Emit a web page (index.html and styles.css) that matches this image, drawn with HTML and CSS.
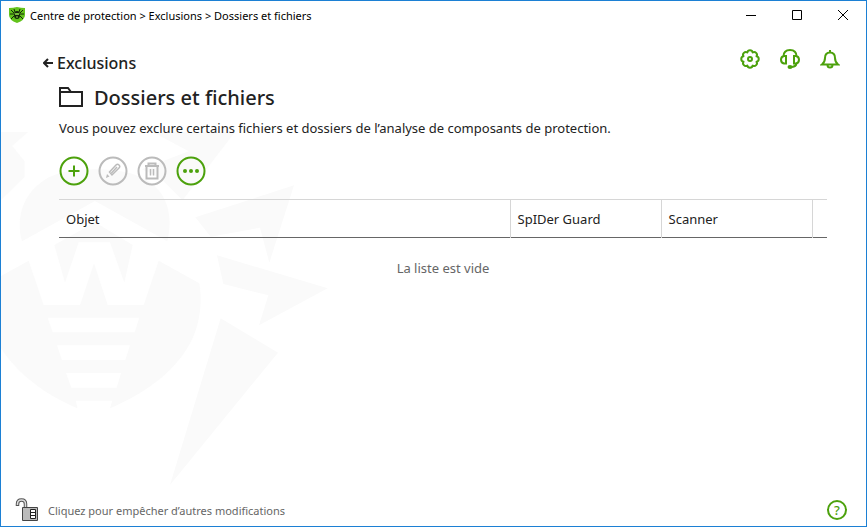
FILE: index.html
```html
<!DOCTYPE html>
<html lang="fr">
<head>
  <meta charset="UTF-8">
  <title>Dossiers et fichiers</title>
  <link rel="stylesheet" href="styles.css">
</head>
<body>
<div class="window">

  <svg class="watermark" viewBox="0 0 1020 1110" aria-hidden="true">
    <path d="M3 36H84L36 78L74 125L3 208V240L3 185Z"/>
    <path d="M3 120L36 78L74 125V170L3 240Z"/>
    <path d="M458 36H705L548 240L485 178Q455 160 425 148L566 94Z"/>
    <path d="M66 364C45 285 75 220 130 182C165 158 215 148 285 148C360 148 430 160 475 210C510 250 516 310 502 364L285 243Z"/>
    <path d="M163 375L285 307L398 375L373 488L330 367H236L195 488Z"/>
    <path fill-rule="evenodd" d="M3 468L86 422L131 555H240L282 430L323 555H431L476 422L598 490C610 560 595 640 555 695C500 775 420 825 330 865L337 842H228L232 865C140 825 60 770 3 685ZM143 593L158 637H404L418 593ZM171 676L186 720H376L390 676ZM198 759L214 803H350L363 759Z"/>
    <path d="M586 292L882 196L808 428L780 323L632 350Z"/>
    <path d="M651 406L983 505L777 616L805 526L670 492Z"/>
    <path d="M662 595L834 698L510 1095Z"/>
  </svg>

  <header class="titlebar">
    <svg class="app-icon" width="16" height="16" viewBox="0 0 16 16" aria-hidden="true">
      <path fill="#62c31c" d="M0 1Q4 1 8 0Q12 1 16 1V8Q16 13 8 16Q0 13 0 8Z"/>
      <path fill="none" stroke="#14250a" d="M5 6L2 3M11 6L14 3M5 7H1M11 7H15M5 9L2 12M11 9L14 12M6 5L5 2M10 5L11 2"/>
      <ellipse cx="8" cy="8" rx="3" ry="4" fill="#14250a"/>
      <path fill="none" stroke="#8ee047" d="M6 6L7 8L8 6L9 8L10 6M7 10H9"/>
    </svg>
    <nav class="breadcrumb">Centre de protection &gt; Exclusions &gt; Dossiers et fichiers</nav>
    <div class="window-buttons">
      <button type="button" aria-label="Réduire"><svg width="12" height="12"><path d="M1 6.500H11"/></svg></button>
      <button type="button" aria-label="Agrandir"><svg width="12" height="12"><path d="M1.500 1.500H10.500V10.500H1.500Z"/></svg></button>
      <button type="button" aria-label="Fermer"><svg width="12" height="12"><path d="M1 1L11 11M11 1L1 11"/></svg></button>
    </div>
  </header>

  <main>
    <div class="topbar">
      <a class="back" href="#">
        <svg width="10" height="10" viewBox="0 0 10 10" aria-hidden="true"><path d="M10 5H1.500M5 1L1 5L5 9"/></svg>
        Exclusions
      </a>
      <div class="tools">
        <button type="button" aria-label="Paramètres">
          <svg width="20" height="20" viewBox="0 0 20 20"><path stroke-linejoin="round" d="M16.500 7.300A2.750 2.750 0 0 1 16.500 12.700A2.750 2.750 0 0 1 12.700 16.500A2.750 2.750 0 0 1 7.300 16.500A2.750 2.750 0 0 1 3.500 12.700A2.750 2.750 0 0 1 3.500 7.300A2.750 2.750 0 0 1 7.300 3.500A2.750 2.750 0 0 1 12.700 3.500A2.750 2.750 0 0 1 16.500 7.300Z"/><circle cx="10" cy="10" r="2"/></svg>
        </button>
        <button type="button" aria-label="Support">
          <svg width="20" height="20" viewBox="0 0 20 20"><path d="M3.500 7.500C3.500 3.500 6 1 10 1S16.500 3.500 16.500 7.500M6 7V14.500H4Q1 14 1 10.800T4 7ZM14 7V14.500H16Q19 14 19 10.800T16 7ZM16.500 14.500Q16 17.500 12 18"/><ellipse class="solid" cx="10" cy="18" rx="2.500" ry="2"/></svg>
        </button>
        <button type="button" aria-label="Notifications">
          <svg width="20" height="20" viewBox="0 0 20 20"><path d="M2 15.500Q5 13 5 9Q5 3.500 10 3.500T15 9Q15 13 18 15.500ZM10 1V3.500M7.500 16Q7.500 18.500 10 18.500T12.500 16"/></svg>
        </button>
      </div>
    </div>

    <section class="content">
      <h1>
        <svg width="24" height="20" viewBox="0 0 24 20" aria-hidden="true"><path d="M1 19V1H9L12 5H23V19ZM1 5H12"/></svg>
        Dossiers et fichiers
      </h1>
      <p class="description">Vous pouvez exclure certains fichiers et dossiers de l’analyse de composants de protection.</p>

      <div class="actions">
        <button type="button" aria-label="Ajouter">
          <svg width="30" height="30"><circle cx="15" cy="15" r="13.500"/><path d="M15 9.500V20.500M9.500 15H20.500"/></svg>
        </button>
        <button type="button" aria-label="Modifier" disabled>
          <svg width="30" height="30"><circle cx="15" cy="15" r="13.500"/><path class="thin" d="M11.500 16L18 9Q19.500 7.500 21 9T21 12L14 19ZM13.500 17L19 11"/><path class="solid" d="M9 18L11.500 20.500L8 22Z"/></svg>
        </button>
        <button type="button" aria-label="Supprimer" disabled>
          <svg width="30" height="30"><circle cx="15" cy="15" r="13.500"/><path d="M8 10H22M11.500 10V7.500H18.500V10M9.500 10V22.500H20.500V10"/><path class="thin" d="M13.500 13V19.500M16.500 13V19.500"/></svg>
        </button>
        <button type="button" aria-label="Plus d'actions">
          <svg width="30" height="30"><circle cx="15" cy="15" r="13.500"/><g class="solid"><circle cx="9" cy="15" r="2"/><circle cx="15" cy="15" r="2"/><circle cx="21" cy="15" r="2"/></g></svg>
        </button>
      </div>

      <table class="objects">
        <thead>
          <tr>
            <th>Objet</th>
            <th class="component">SpIDer Guard</th>
            <th class="component">Scanner</th>
            <td class="spacer"></td>
          </tr>
        </thead>
        <tbody>
          <tr><td class="empty" colspan="4">La liste est vide</td></tr>
        </tbody>
      </table>
    </section>
  </main>

  <footer>
    <button type="button" class="lock">
      <svg width="24" height="26" viewBox="0 0 24 26" aria-hidden="true">
        <path fill="none" stroke="#555" stroke-width="3.500" d="M2.500 9V7Q2.500 3 6.500 3T10.500 7V12"/>
        <path fill="none" stroke="#ddd" stroke-width="1.500" d="M2.500 8V7Q2.500 3 6.500 3T10.500 7V12"/>
        <path fill="#bbb" stroke="#444" d="M7.500 10.500H22.500V23.500H7.500Z"/>
        <path fill="#fff" stroke="#222" d="M15.500 12.500H20.500V21.500H15.500ZM15.500 15.500H20.500M15.500 18.500H20.500"/>
      </svg>
      Cliquez pour empêcher d’autres modifications
    </button>
    <button type="button" class="help" aria-label="Aide">?</button>
  </footer>

</div>
</body>
</html>
```
FILE: styles.css
```css
* {
  box-sizing: border-box;
}

body {
  margin: 0;
  font-family: "Noto Sans", "Open Sans", sans-serif;
  font-size: 13px;
  color: #222;
  background: #fff;
}

button {
  display: flex;
  padding: 0;
  border: none;
  background: none;
  font: inherit;
  cursor: pointer;
}

svg {
  flex: none;
}

.window {
  position: relative;
  z-index: 0;
  display: flex;
  flex-direction: column;
  min-height: 100vh;
  border: 1px solid #1c80d4;
}

/* spider logo behind the content */
.watermark {
  position: absolute;
  z-index: -1;
  left: -1px;
  top: 119px;
  width: 340px;
  fill: #fafafa;
}

.titlebar {
  display: flex;
  align-items: center;
  height: 28px;
  padding-left: 8px;
  font-size: 11px;
  color: #000;
}

.breadcrumb {
  flex: 1;
  margin-left: 5px;
}

.window-buttons {
  display: flex;
}

.window-buttons button {
  width: 46px;
  height: 28px;
  align-items: center;
  justify-content: center;
}

.window-buttons svg {
  fill: none;
  stroke: #000;
}

main {
  flex: 1;
}

.topbar {
  display: flex;
  justify-content: space-between;
  padding: 20px 26px 0 42px;
}

.back {
  display: flex;
  align-items: center;
  gap: 4px;
  height: 28px;
  font-size: 16px;
  font-weight: 500;
  color: #222;
  text-decoration: none;
}

.back svg,
h1 svg {
  fill: none;
  stroke: #222;
  stroke-width: 2;
}

.tools {
  display: flex;
  align-items: flex-start;
  gap: 20px;
}

.tools svg,
.actions svg {
  fill: none;
  stroke: #4ca10c;
  stroke-width: 2;
}

.content {
  padding: 0 39px 0 58px;
}

h1 {
  display: flex;
  align-items: center;
  gap: 11px;
  height: 40px;
  margin: 0;
  font-size: 20px;
  font-weight: 500;
}

.description {
  margin: 0;
  line-height: 22px;
}

.actions {
  display: flex;
  gap: 9px;
  margin: 17px 0 13px;
}

.actions button:disabled svg {
  stroke: #bbb;
}

.actions .thin {
  stroke-width: 1.5;
}

.tools .solid,
.actions .solid {
  fill: #4ca10c;
  stroke: none;
}

.actions button:disabled .solid {
  fill: #bbb;
}

.objects {
  width: 100%;
  table-layout: fixed;
  border-collapse: collapse;
}

.objects thead tr {
  height: 38px;
  border-top: 1px solid #d6d6d6;
  border-bottom: 1px solid #666;
}

.objects th {
  padding: 0 7px;
  text-align: left;
  font-weight: normal;
}

.objects .component,
.objects .spacer {
  border-left: 1px solid #d6d6d6;
}

.component {
  width: 151px;
}

.spacer {
  width: 15px;
}

.objects .empty {
  padding: 21px 0;
  text-align: center;
  color: #666;
}

footer {
  display: flex;
  align-items: center;
  justify-content: space-between;
  padding: 0 19px 3px 14px;
}

.lock {
  align-items: center;
  gap: 9px;
  font-size: 11px;
  color: #666;
}

.help {
  width: 20px;
  height: 20px;
  align-items: center;
  justify-content: center;
  border: 2px solid #4ca10c;
  border-radius: 50%;
  font-size: 13px;
  font-weight: 500;
  color: #4ca10c;
}
```
